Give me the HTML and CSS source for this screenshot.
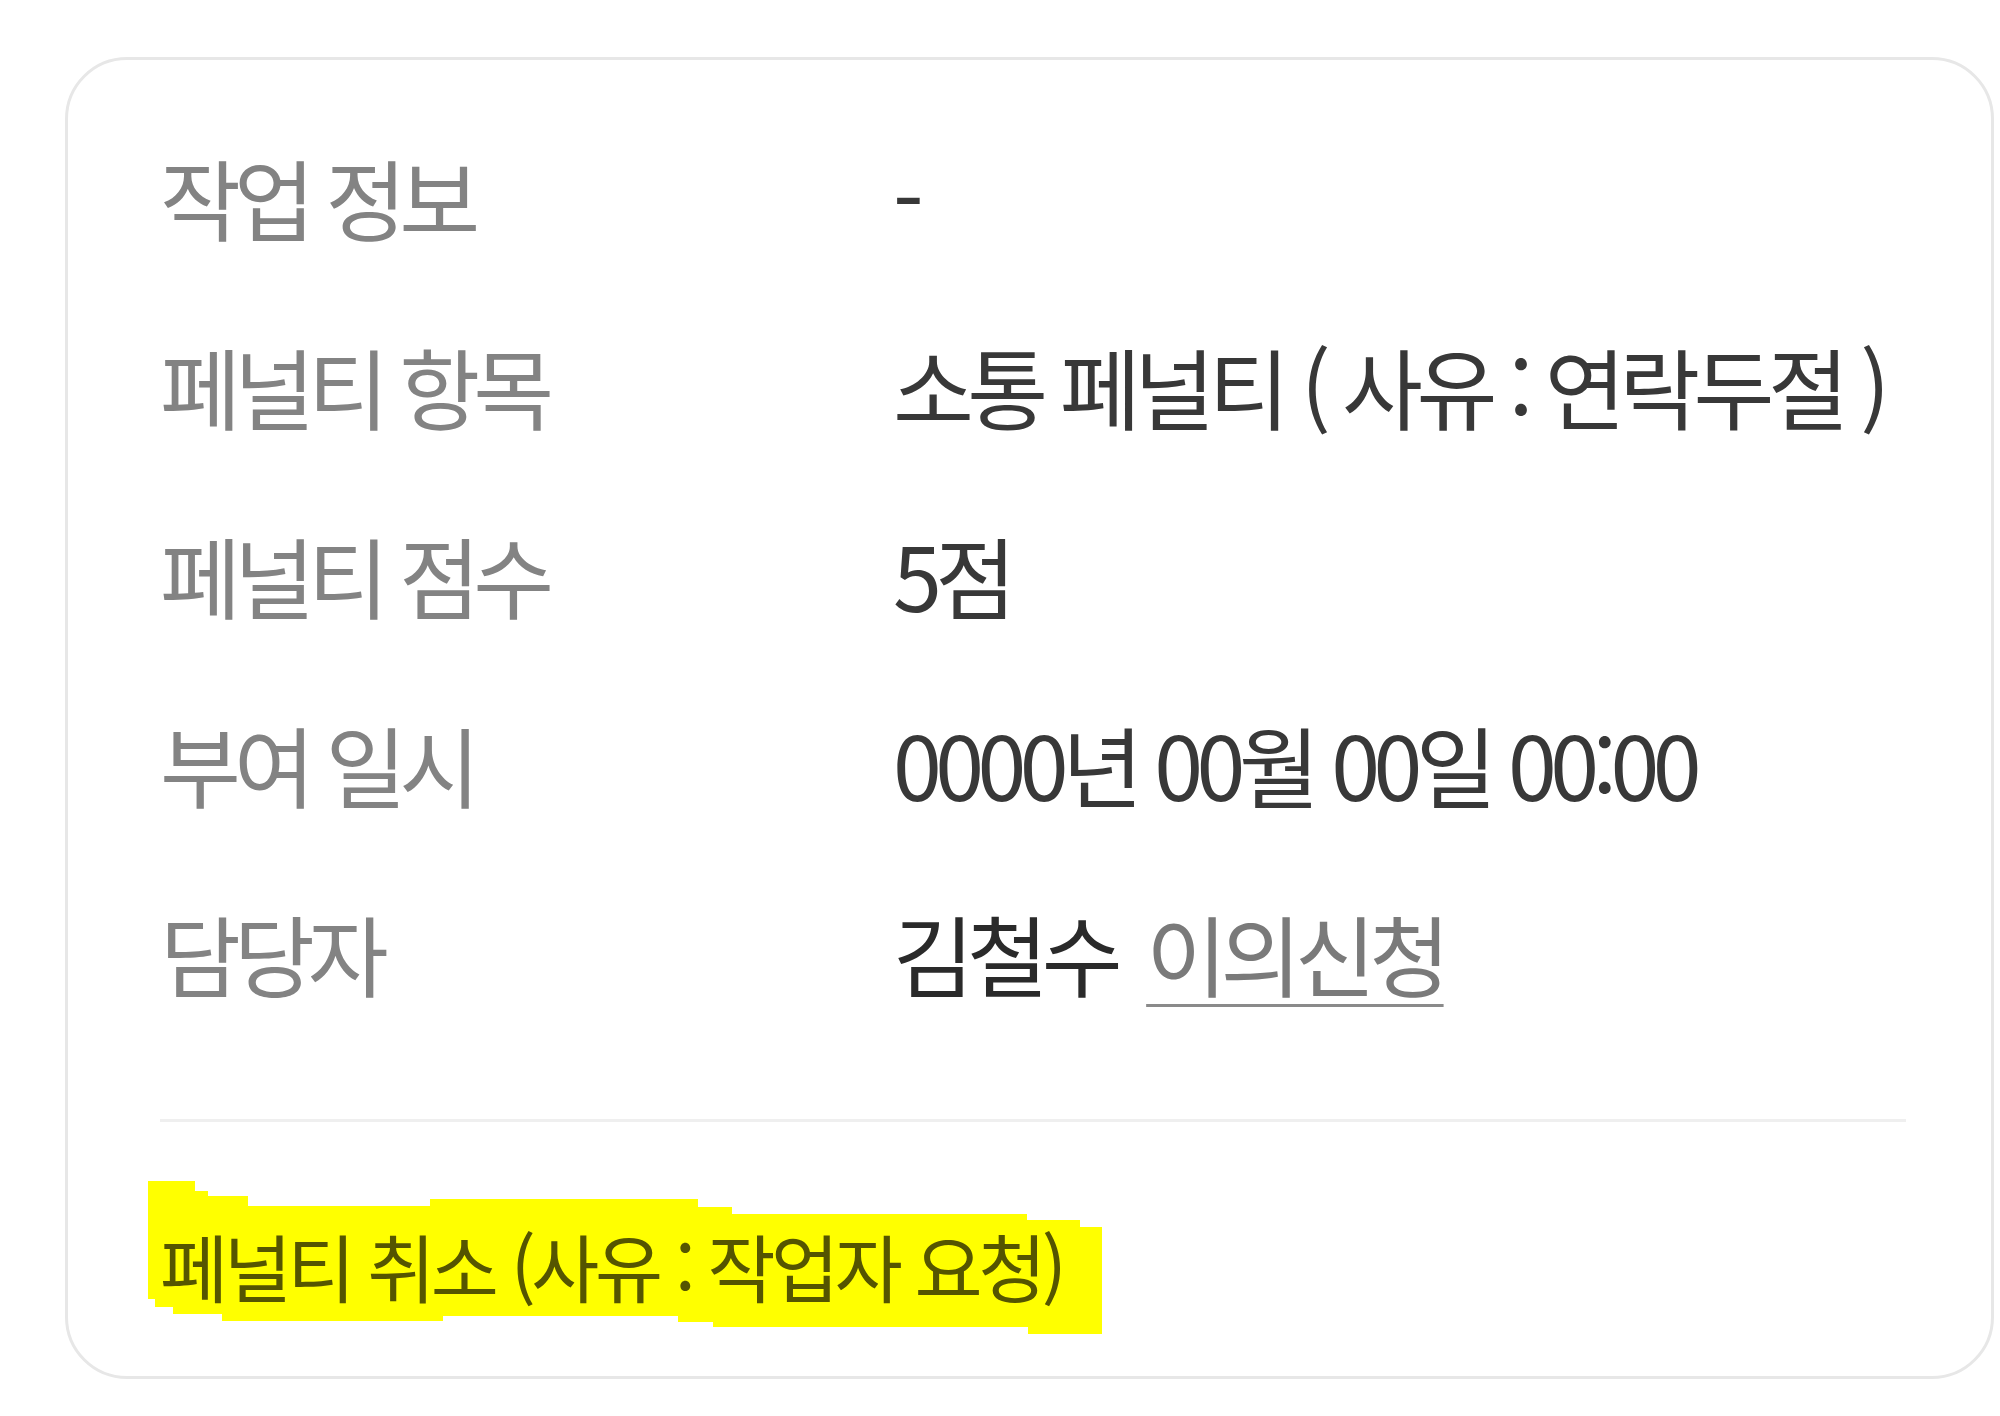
FILE: index.html
```html
<!DOCTYPE html>
<html lang="ko">
<head>
<meta charset="utf-8">
<title>페널티 상세</title>
<link rel="stylesheet" href="styles.css">
</head>
<body>
  <section class="card">
    <dl class="info">
      <dt class="label">작업 정보</dt>
      <dd class="value">-</dd>
      <dt class="label">페널티 항목</dt>
      <dd class="value">소통 페널티 ( 사유 : 연락두절 )</dd>
      <dt class="label">페널티 점수</dt>
      <dd class="value">5점</dd>
      <dt class="label">부여 일시</dt>
      <dd class="value">0000년 00월 00일 00:00</dd>
      <dt class="label">담당자</dt>
      <dd class="value"><span class="manager">김철수</span> <a class="appeal" href="#">이의신청</a></dd>
    </dl>
    <hr class="divider">
    <p class="cancel">
      <span class="cancel-text">페널티 취소 (사유 : 작업자 요청)</span>
      <svg class="marker" width="954" height="153" viewBox="0 0 954 153" aria-hidden="true">
        <polygon fill="#ffff00" points="0,0 47,0 47,10 60,10 60,15 100,15 100,25 282,25 282,18 550,18 550,26 584,26 584,33 879,33 879,39 932,39 932,46 954,46 954,153 880,153 880,146 565,146 565,141 530,141 530,135 295,135 295,140 74,140 74,133 25,133 25,126 7,126 7,118 0,118"/>
      </svg>
    </p>
  </section>
</body>
</html>
```
FILE: styles.css
```css
* { box-sizing: border-box; }

html, body {
  margin: 0;
  padding: 0;
  background: #ffffff;
}

body {
  font-family: "Noto Sans CJK KR", "Noto Sans", sans-serif;
  color: #333333;
}

.card {
  margin: 57px 0 0 65px;
  width: 1929px;
  border: 3px solid #e7e7e7;
  border-radius: 62px;
  padding: 70px 85px 55px 92px;
  background: #ffffff;
}

.info {
  display: grid;
  grid-template-columns: 733px 1fr;
  row-gap: 57px;
  margin: 0;
  font-size: 88px;
  line-height: 132px;
  letter-spacing: -0.075em;
}

.label {
  margin: 0;
  color: #838383;
  white-space: nowrap;
  letter-spacing: -0.08em;
}

.value {
  margin: 0;
  color: #383838;
  white-space: nowrap;
}

.manager {
  color: #2a2a2a;
}

.appeal {
  margin-left: 12px;
  color: #7a7a7a;
  text-decoration: underline;
  text-decoration-color: #8a8a8a;
  text-decoration-thickness: 3px;
  text-underline-offset: 14px;
}

.divider {
  margin: 101px 0 0 0;
  border: 0;
  height: 3px;
  background: #efefef;
}

.cancel {
  position: relative;
  margin: 87px 0 0 0;
  font-size: 74px;
  line-height: 112px;
  letter-spacing: -0.06em;
  color: #555555;
  white-space: nowrap;
}

.marker {
  position: absolute;
  left: -12px;
  top: -28px;
  mix-blend-mode: multiply;
}
```
